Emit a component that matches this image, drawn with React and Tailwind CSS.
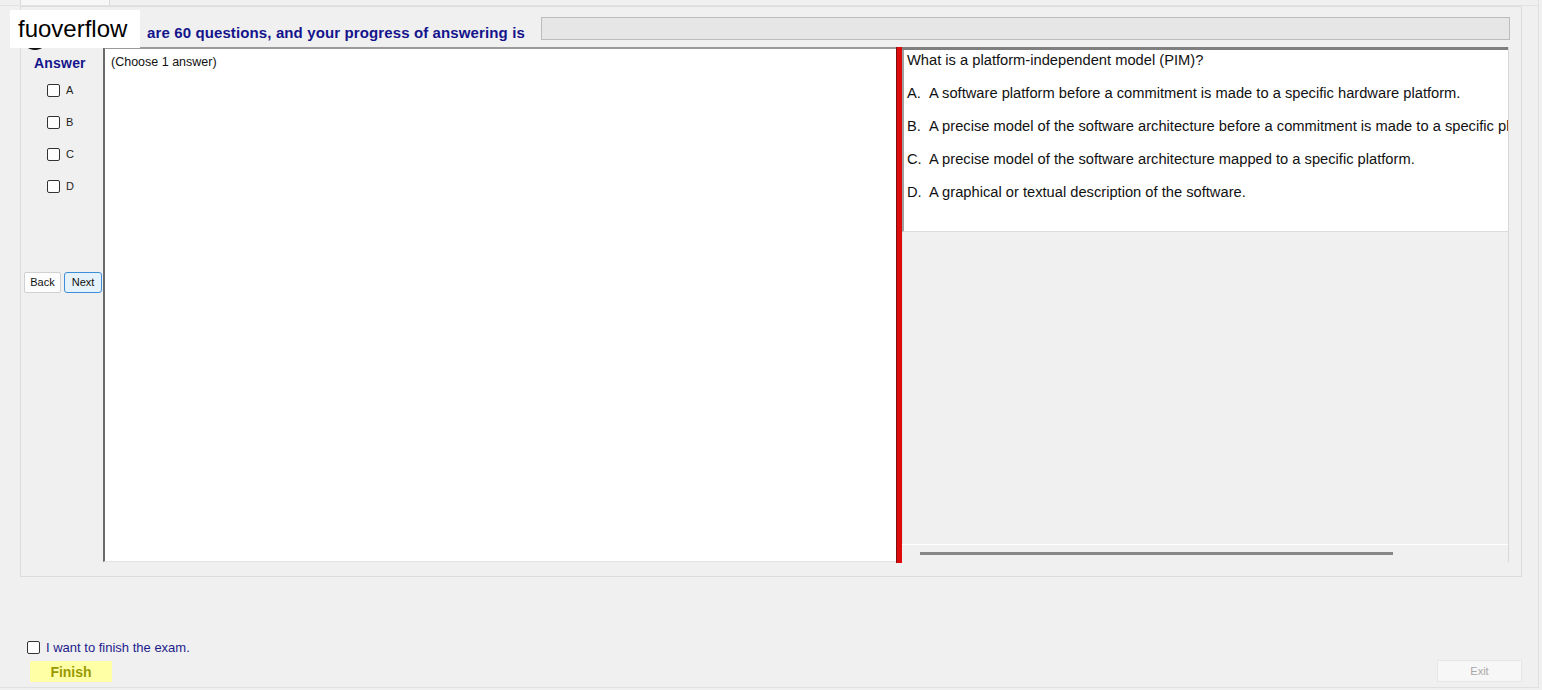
const options = [
  { key: 'A', text: 'A software platform before a commitment is made to a specific hardware platform.' },
  { key: 'B', text: 'A precise model of the software architecture before a commitment is made to a specific platform.' },
  { key: 'C', text: 'A precise model of the software architecture mapped to a specific platform.' },
  { key: 'D', text: 'A graphical or textual description of the software.' },
];

function Box() {
  return <div className="w-[13px] h-[13px] shrink-0 rounded-[2px] border border-[#333] bg-white"></div>;
}

export default function App() {
  return (
    <div className="relative w-[1542px] h-[690px] overflow-hidden bg-[#f0f0f0] font-['Liberation_Sans',Arial,sans-serif]">
      <div className="w-[1539px] h-[688px] border-r border-b border-[#e0e0e0]">
        {/* tab strip */}
        <div className="flex h-[6px] border-b border-[#e3e3e3]">
          <div className="ml-[20px] w-[90px] h-full bg-[#f7f7f7] border-x border-[#dadada]"></div>
        </div>

        {/* main group */}
        <div className="ml-[20px] w-[1502px] h-[571px] border border-[#dcdcdc] pt-[10px] flex flex-col">
          {/* header */}
          <div className="flex items-start h-[23px]">
            <div className="ml-[126px] pt-[8px] text-[15px] leading-[16px] font-bold text-[#14148c] tracking-[0.12px] whitespace-nowrap">
              are 60 questions, and your progress of answering is
            </div>
            <div className="ml-auto mr-[11px] w-[969px] h-[23px] bg-[#e6e6e6] border border-[#bcbcbc]"></div>
          </div>

          {/* content */}
          <div className="mt-[7px] h-[515px] flex">
            {/* answer column */}
            <div className="w-[82px] shrink-0 flex flex-col">
              <div className="pt-[8px] pl-[13px] text-[14px] leading-[16px] font-bold text-[#14148c] tracking-[0.2px]">Answer</div>
              <div className="mt-[13px] flex flex-col">
                {options.map((o) => (
                  <div key={o.key} className="h-[32px] pl-[26px] flex items-start gap-[6px]">
                    <Box />
                    <span className="text-[11px] leading-[13px] text-[#222]">{o.key}</span>
                  </div>
                ))}
              </div>
              <div className="mt-[60px] pl-[3px] flex gap-[3px]">
                <div className="w-[37px] h-[21px] flex items-center justify-center bg-[#fdfdfd] border border-[#d0d0d0] rounded-[2px] text-[11px] text-[#111]">Back</div>
                <div className="w-[38px] h-[21px] flex items-center justify-center bg-[#e5f1fb] border border-[#3c8fd6] rounded-[3px] text-[11px] text-[#111]">Next</div>
              </div>
            </div>

            {/* middle pane */}
            <div className="w-[793px] shrink-0 bg-white border-l-2 border-l-[#6a6a6a] border-t-2 border-t-[#9a9a9a] border-b border-b-[#e3e3e3] pl-[6px] pt-[6px]">
              <div className="text-[12.5px] leading-[14px] text-[#111]">(Choose 1 answer)</div>
            </div>

            {/* splitter */}
            <div className="w-[6px] h-[516px] shrink-0 bg-[#dd0b0b] border-l border-[#7a1010]"></div>

            {/* question pane */}
            <div className="w-[607px] shrink-0 flex flex-col border-r border-[#d8d8d8]">
              <div className="h-[3px] bg-[#7f7f7f]"></div>
              <div className="h-[182px] bg-white border-l-2 border-[#a0a0a0] border-b border-b-[#dcdcdc] pl-[3px] overflow-hidden">
                <div className="pt-[1px] h-[19px] text-[14.7px] leading-[18px] text-[#111] whitespace-nowrap">
                  What is a platform-independent model (PIM)?
                </div>
                <div className="mt-[8px]">
                  {options.map((o) => (
                    <div key={o.key} className="h-[33px] flex items-center text-[14.7px] text-[#111] whitespace-nowrap">
                      <span className="inline-block w-[22px] shrink-0">{o.key}.</span>
                      <span className="shrink-0">{o.text}</span>
                    </div>
                  ))}
                </div>
              </div>
              <div className="flex-1 bg-[#f0f0f0] border-l border-[#e4e4e4]"></div>
              <div className="h-[18px] border-t border-white bg-[#f0f0f0] flex items-center">
                <div className="ml-[18px] w-[473px] h-[3px] bg-[#878787]"></div>
              </div>
            </div>
          </div>
        </div>

        {/* finish area */}
        <div className="mt-[63px] pl-[27px] flex items-center gap-[6px] h-[14px]">
          <Box />
          <span className="pt-[2px] text-[13px] leading-[14px] text-[#1c1c8c]">I want to finish the exam.</span>
        </div>
        <div className="mt-[6px] flex items-start justify-between">
          <div className="ml-[30px] mt-[1px] w-[82px] h-[21px] bg-[#ffffa6] flex items-center justify-center pt-[1px] text-[14px] font-bold text-[#9a9a00]">Finish</div>
          <div className="mr-[16px] w-[85px] h-[22px] bg-[#f7f7f7] border border-[#e6e6e6] flex items-center justify-center text-[11px] text-[#a8a8a8]">Exit</div>
        </div>
      </div>

      {/* icon peeking below the watermark */}
      <div className="absolute left-[22px] top-[24px] w-[26px] h-[26px] rounded-full border-[3px] border-[#111]"></div>

      {/* watermark */}
      <div className="absolute left-[10px] top-[10px] w-[130px] h-[38px] bg-white flex items-center pl-[8px] text-[24px] text-black">
        fuoverflow
      </div>
    </div>
  );
}
